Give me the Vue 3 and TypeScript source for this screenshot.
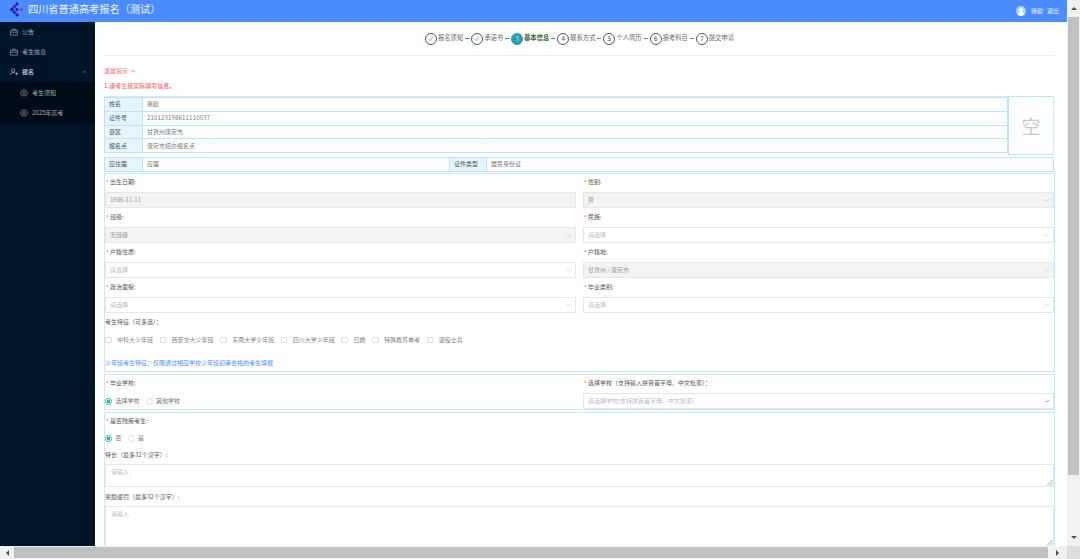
<script setup lang="ts">
const steps = [
  { n: '✓', t: '报名须知', s: 'done' },
  { n: '✓', t: '承诺书', s: 'done' },
  { n: '3', t: '基本信息', s: 'active' },
  { n: '4', t: '联系方式', s: '' },
  { n: '5', t: '个人简历', s: '' },
  { n: '6', t: '报考科目', s: '' },
  { n: '7', t: '提交申请', s: '' }
]
const infoRows = [
  ['姓名', '徐欧'],
  ['证件号', '210123198611110037'],
  ['县区', '甘孜州康定市'],
  ['报名点', '康定市招办报名点']
]
const fields = [
  { l: '出生日期', v: '1986-11-11', d: true, arrow: false, ph: false },
  { l: '性别', v: '男', d: true, arrow: true, ph: false },
  { l: '班级', v: '无班级', d: true, arrow: true, ph: false },
  { l: '民族', v: '请选择', d: false, arrow: true, ph: true },
  { l: '户籍性质', v: '请选择', d: false, arrow: true, ph: true },
  { l: '户籍地', v: '甘孜州 / 康定市', d: true, arrow: true, ph: false },
  { l: '政治面貌', v: '请选择', d: false, arrow: true, ph: true },
  { l: '毕业类别', v: '请选择', d: false, arrow: true, ph: true }
]
const checks = ['中科大少年班', '西安交大少年班', '东南大学少年班', '四川大学少年班', '已婚', '特殊教育单考', '退役士兵']
</script>

<template>
  <div class="page">
    <div class="viewport">
      <header class="topbar">
        <div class="brand">
          <svg class="logo" width="15" height="15" viewBox="0 0 15 15">
            <path d="M8 0l2 2-2 2-2-2zM5.500 2.500l2 2-2 2-2-2zM3 5l2.500 2.500L3 10 .5 7.500zM5.500 8.500l2 2-2 2-2-2zM8 11l2 2-2 2-2-2zM8 5.500l2 2-2 2-2-2z" fill="#2a1fb4" />
            <path d="M12.500 5.800l1.700 1.700-1.700 1.700-1.700-1.700z" fill="#ee1c25" />
          </svg>
          <span>四川省普通高考报名（测试）</span>
        </div>
        <div class="user">
          <svg width="10" height="10" viewBox="0 0 10 10">
            <circle cx="5" cy="5" r="5" fill="#a8d6ff" />
            <circle cx="5" cy="3.800" r="1.900" fill="#fff" />
            <path d="M1.700 8.600C2 6.600 3.500 6 5 6s3 .6 3.300 2.600A5 5 0 0 1 1.700 8.600z" fill="#fff" />
          </svg>
          <span class="uname">徐欧</span>
          <span>退出</span>
        </div>
      </header>
      <div class="body">
        <aside class="side">
          <div class="menu"><svg class="mi" viewBox="0 0 9 8"><path d="M.5 2h8v5.500h-8zM3 2V.7h3V2M.5 4.200h8" /></svg>公告</div>
          <div class="menu"><svg class="mi" viewBox="0 0 9 8"><path d="M.5 2h8v5.500h-8zM3 2V.7h3V2M.5 4.200h8" /></svg>考生信息</div>
          <div class="menu open">
            <svg class="mi" viewBox="0 0 9 8"><circle cx="3.500" cy="2.300" r="1.800" /><path d="M.5 7.500c0-2 1.300-3 3-3s2 .4 2.500 1M6 6h3M7.500 4.500v3" /></svg>报名
            <svg class="caret" viewBox="0 0 6 4"><path d="M1 3l2-2 2 2" /></svg>
          </div>
          <div class="sub">
            <div class="subitem"><svg class="mi" viewBox="0 0 9 8"><path d="M.5 4L2.500.8h4L8.500 4l-2 3.200h-4z" /><circle cx="4.500" cy="4" r="1.300" /></svg>考生须知</div>
            <div class="subitem"><svg class="mi" viewBox="0 0 9 8"><path d="M.5 4L2.500.8h4L8.500 4l-2 3.200h-4z" /><circle cx="4.500" cy="4" r="1.300" /></svg>2025年高考</div>
          </div>
        </aside>
        <main class="content">
          <nav class="steps">
            <template v-for="(s, i) in steps" :key="s.t">
              <span v-if="i" class="dash"></span>
              <span class="num" :class="s.s">{{ s.n }}</span>
              <span class="stxt" :class="s.s">{{ s.t }}</span>
            </template>
          </nav>
          <div class="tip">温馨提示 <svg width="6" height="4" viewBox="0 0 6 4"><path d="M.6 3.400L3 1l2.400 2.400" fill="none" stroke="#f56c6c" stroke-width=".7" /></svg></div>
          <div class="tip second">1.请考生按实际填写信息。</div>

          <section class="info">
            <div class="infotable">
              <div v-for="r in infoRows" :key="r[0]" class="irow">
                <div class="ilabel">{{ r[0] }}</div>
                <div class="ivalue" :class="{ digits: r[0] === '证件号' }">{{ r[1] }}</div>
              </div>
            </div>
            <div class="photo">空</div>
          </section>
          <section class="irow single">
            <div class="ilabel">应往届</div>
            <div class="ivalue grow1">应届</div>
            <div class="ilabel l2">证件类型</div>
            <div class="ivalue grow2">居民身份证</div>
          </section>

          <section class="box main-box">
            <div class="grid">
              <div v-for="f in fields" :key="f.l" class="field">
                <label class="lbl"><i>*</i>{{ f.l }}:</label>
                <div class="control" :class="{ disabled: f.d, ph: f.ph }">
                  <span>{{ f.v }}</span>
                  <svg v-if="f.arrow" class="arr" viewBox="0 0 6 4"><path d="M.6.8L3 3.200 5.400.8" /></svg>
                </div>
              </div>
            </div>
            <div class="lbl plain">考生特征（可多选）：</div>
            <div class="checks">
              <span v-for="c in checks" :key="c" class="chk"><b></b>{{ c }}</span>
            </div>
            <div class="hint">少年班考生特征：仅限通过相应学校少年班初审合格的考生填报</div>
          </section>

          <section class="box school">
            <div class="col">
              <label class="lbl"><i>*</i>毕业学校:</label>
              <div class="radios">
                <span class="radio on"><b></b>选择学校</span>
                <span class="radio"><b></b>其他学校</span>
              </div>
            </div>
            <div class="col">
              <label class="lbl"><i>*</i>选择学校（支持输入拼音首字母、中文检索）：</label>
              <div class="control ph">
                <span>请选择学校(支持拼音首字母、中文检索)</span>
                <svg class="arr dark" viewBox="0 0 6 4"><path d="M.6.8L3 3.200 5.400.8" /></svg>
              </div>
            </div>
          </section>

          <section class="box last">
            <label class="lbl"><i>*</i>是否残疾考生:</label>
            <div class="radios r2">
              <span class="radio on"><b></b>否</span>
              <span class="radio"><b></b>是</span>
            </div>
            <div class="lbl plain t1">特长（最多32个汉字）:</div>
            <div class="area a1">请输入<svg class="grip" viewBox="0 0 7 7"><path d="M1 6.500L6.500 1M4 6.500L6.500 4" /></svg></div>
            <div class="lbl plain t2">奖励惩罚（最多32个汉字）:</div>
            <div class="area a2">请输入<svg class="grip" viewBox="0 0 7 7"><path d="M1 6.500L6.500 1M4 6.500L6.500 4" /></svg></div>
          </section>
        </main>
      </div>
    </div>
    <div class="vbar">
      <div class="btn"><span class="up"></span></div>
      <div class="vthumb"></div>
      <div class="btn end"><span class="down"></span></div>
    </div>
    <div class="hbar">
      <div class="hbtn"><span class="left"></span></div>
      <div class="hthumb"></div>
      <div class="hbtn"><span class="right"></span></div>
    </div>
    <div class="corner"></div>
  </div>
</template>

<style>
html, body { margin: 0; background: #fff; overflow: hidden; }
</style>

<style scoped>
.page {
  width: 1080px;
  height: 559px;
  display: grid;
  grid-template-columns: 1067px 13px;
  grid-template-rows: 546px 13px;
  overflow: hidden;
  font-family: "Noto Sans CJK SC", "Noto Sans", sans-serif;
  font-size: 6px;
  color: #606266;
  line-height: 1;
}
.viewport { display: flex; flex-direction: column; overflow: hidden; min-height: 0; }
.topbar {
  flex: 0 0 21.500px;
  height: 21.500px;
  background: #4a8cff;
  display: flex;
  align-items: center;
  justify-content: space-between;
  color: #fff;
  box-sizing: border-box;
  padding: 0 8px 4px 9px;
}
.brand { display: flex; align-items: center; gap: 4px; font-size: 10.200px; color: #f2f7ff; }
.logo { margin-top: 1px; }
.user { display: flex; align-items: center; font-size: 6px; gap: 4px; margin-top: 4px; color: #eaf2ff; }
.uname { margin-left: 1px; }
.body { flex: 1; display: flex; min-height: 0; }
.side { flex: 0 0 95px; background: #001529; color: #a6adb4; }
.menu {
  height: 20px;
  display: flex;
  align-items: center;
  padding-left: 10px;
  gap: 4px;
}
.menu.open { color: #d5d8db; font-weight: 500; }
.mi { width: 8px; height: 8px; fill: none; stroke: currentColor; stroke-width: .7; flex: none; }
.caret { width: 5px; height: 4px; margin-left: auto; margin-right: 8px; fill: none; stroke: #a6adb4; stroke-width: .7; }
.sub { background: #000c17; padding: 1px 0 1px; }
.subitem { height: 20px; display: flex; align-items: center; padding-left: 20px; gap: 4px; }
.content {
  flex: 1;
  min-width: 0;
  padding: 0 13px 0 9px;
  background: #fff;
  overflow: hidden;
}
.steps {
  height: 34px;
  box-sizing: border-box;
  border-bottom: 1px solid #ececec;
  display: flex;
  align-items: center;
  justify-content: center;
  padding: 1px 0 0 1px;
  font-size: 6.300px;
  color: #666;
}
.num {
  width: 10px;
  height: 10px;
  border: .7px solid #555;
  border-radius: 50%;
  display: flex;
  align-items: center;
  justify-content: center;
  font-size: 6px;
  flex: none;
  margin-right: 1px;
  color: #444;
}
.num.done { color: #30a8a0; }
.num.active { background: #2a9fb0; border-color: #2a9fb0; color: #bfe6ea; }
.stxt.active { color: #2e5d2e; font-weight: 700; }
.dash { width: 4px; height: 1px; background: #777; margin: 0 2px; }
.tip { color: #f56c6c; margin-top: 12px; height: 6px; display: flex; align-items: center; gap: 2px; }
.tip.second { margin-top: 9px; font-weight: 500; }
.info { display: flex; margin-top: 7.500px; border-top: 1px solid #e4e7ea; }
.infotable { flex: 1; border-bottom: 1px solid #bde3f9; margin-bottom: 2px; }
.irow {
  display: flex;
  height: 13.750px;
  box-sizing: border-box;
  border: 1px solid #bde3f9;
  border-bottom: 0;
  align-items: stretch;
}
.ilabel {
  flex: 0 0 38px;
  background: #e6f4fd;
  border-right: 1px solid #bde3f9;
  display: flex;
  align-items: center;
  padding-left: 4px;
  box-sizing: border-box;
  color: #555;
}
.ivalue { flex: 1; display: flex; align-items: center; padding-left: 4px; color: #777; }
.ivalue.digits { letter-spacing: .18px; }
.photo {
  flex: 0 0 46px;
  height: 59px;
  box-sizing: border-box;
  border: 1px solid #bde3f9;
  border-right-color: #dbeaf5;
  display: flex;
  align-items: center;
  justify-content: center;
  font-size: 19px;
  color: #c8c8c8;
  margin-top: -1px;
}
.single { margin-top: 1.500px; height: 15px; border-bottom: 1px solid #bde3f9; width: 950px; }
.grow1 { flex: 0 0 302px; }
.l2 { border-left: 1px solid #bde3f9; }
.grow2 { flex: 1; }
.box { border: 1px solid #c5e8fb; width: 951px; box-sizing: border-box; }
.main-box { margin-top: 1.500px; height: 199px; }
.grid {
  display: grid;
  grid-template-columns: 471px 471px;
  column-gap: 7px;
  row-gap: 0;
}
.field { height: 35px; }
.lbl { display: flex; align-items: center; height: 18px; padding-bottom: 2px; box-sizing: border-box; color: #555; }
.lbl i { color: #f56c6c; font-style: normal; width: 5px; padding: 2px 0 0 1px; box-sizing: border-box; }
.control {
  height: 16px;
  box-sizing: border-box;
  border: 1px solid #e4e7ed;
  display: flex;
  align-items: center;
  justify-content: space-between;
  padding: 0 3px 0 4px;
  color: #999;
}
.control.ph { color: #bbb; }
.control.disabled { background: #f3f3f3; }
.arr { width: 6px; height: 4px; fill: none; stroke: #c0c4cc; stroke-width: .7; }
.arr.dark { stroke: #888; }
.checks { display: flex; height: 16px; align-items: center; color: #808080; gap: 6.600px; }
.chk { display: flex; align-items: center; gap: 5.500px; }
.chk b { width: 6.500px; height: 6.500px; box-sizing: border-box; border: .7px solid #dcdfe6; border-radius: 1px; }
.hint { color: #4a8cff; margin-top: 12px; height: 6px; }
.school {
  margin-top: 2px;
  height: 36px;
  display: grid;
  grid-template-columns: 471px 471px;
  column-gap: 7px;
}
.radios { display: flex; height: 16px; align-items: center; gap: 6px; color: #777; }
.radio { display: flex; align-items: center; gap: 3.500px; }
.radio b { width: 7px; height: 7px; box-sizing: border-box; border: .7px solid #dcdfe6; border-radius: 50%; }
.radio.on b { border-color: #2fb5a5; background: radial-gradient(circle, #2fb5a5 0 1.800px, #fff 2px); }
.last { margin-top: 2px; height: 140px; border-bottom: 0; }
.r2 { height: 14px; }
.t1 { height: 19px; padding-bottom: 0; }
.area {
  border: 1px solid #e8e8e8;
  box-sizing: border-box;
  padding: 4px 5px;
  color: #bbb;
  display: flex;
  justify-content: space-between;
}
.a1 { height: 23px; }
.a2 { height: 41px; }
.t2 { height: 19px; padding-bottom: 0; }
.grip {
  width: 7px;
  height: 7px;
  margin-top: auto;
  margin-right: -5px;
  margin-bottom: -4px;
  fill: none;
  stroke: #777;
  stroke-width: .7;
}
.vbar {
  grid-column: 2;
  grid-row: 1;
  background: #f1f1f1;
  display: flex;
  flex-direction: column;
}
.btn { height: 17px; flex: none; display: flex; align-items: center; justify-content: center; }
.btn.end { margin-top: auto; }
.vthumb { height: 458px; width: 11px; margin: 0 auto; background: #c1c1c1; }
.up, .down, .left, .right { width: 0; height: 0; border: 3px solid transparent; }
.up { border-bottom: 3px solid #505050; border-top: 0; }
.down { border-top: 3px solid #505050; border-bottom: 0; }
.left { border-right: 3px solid #505050; border-left: 0; }
.right { border-left: 3px solid #505050; border-right: 0; }
.hbar {
  grid-column: 1;
  grid-row: 2;
  background: #f1f1f1;
  display: flex;
  align-items: stretch;
}
.hbtn { flex: 0 0 14px; display: flex; align-items: center; justify-content: center; }
.hbtn:last-child { flex: 0 0 19px; }
.hthumb { flex: 1; background: #c1c1c1; margin: 1px 0; }
.corner { grid-column: 2; grid-row: 2; background: #dcdcdc; }
</style>
